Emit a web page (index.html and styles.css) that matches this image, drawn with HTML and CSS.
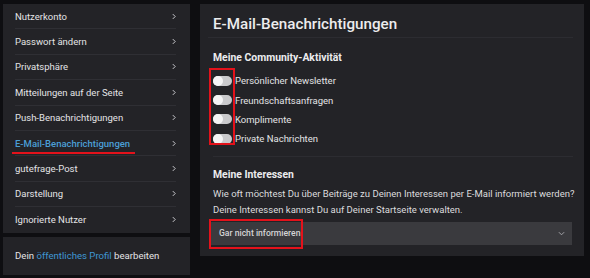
FILE: index.html
```html
<!DOCTYPE html>
<html lang="de">
<head>
<meta charset="utf-8">
<link rel="stylesheet" href="styles.css">
</head>
<body>
<div class="page">
  <aside class="side">
    <nav class="menu">
      <a class="item">Nutzerkonto<svg class="chev" viewBox="0 0 5 8"><path d="M1 1l3 3-3 3"/></svg></a>
      <a class="item">Passwort ändern<svg class="chev" viewBox="0 0 5 8"><path d="M1 1l3 3-3 3"/></svg></a>
      <a class="item">Privatsphäre<svg class="chev" viewBox="0 0 5 8"><path d="M1 1l3 3-3 3"/></svg></a>
      <a class="item">Mitteilungen auf der Seite<svg class="chev" viewBox="0 0 5 8"><path d="M1 1l3 3-3 3"/></svg></a>
      <a class="item">Push-Benachrichtigungen<svg class="chev" viewBox="0 0 5 8"><path d="M1 1l3 3-3 3"/></svg></a>
      <a class="item active"><span class="mark">E-Mail-Benachrichtigungen</span><svg class="chev" viewBox="0 0 5 8"><path d="M1 1l3 3-3 3"/></svg></a>
      <a class="item">gutefrage-Post<svg class="chev" viewBox="0 0 5 8"><path d="M1 1l3 3-3 3"/></svg></a>
      <a class="item">Darstellung<svg class="chev" viewBox="0 0 5 8"><path d="M1 1l3 3-3 3"/></svg></a>
      <a class="item">Ignorierte Nutzer<svg class="chev" viewBox="0 0 5 8"><path d="M1 1l3 3-3 3"/></svg></a>
    </nav>
    <div class="profile"><span>Dein <span class="link">öffentliches Profil</span> bearbeiten</span></div>
  </aside>
  <main class="panel">
    <h1 class="title">E-Mail-Benachrichtigungen</h1>
    <section class="section">
      <h2 class="heading">Meine Community-Aktivität</h2>
      <div class="toggles">
        <label class="row"><span class="toggle"></span>Persönlicher Newsletter</label>
        <label class="row"><span class="toggle"></span>Freundschaftsanfragen</label>
        <label class="row"><span class="toggle"></span>Komplimente</label>
        <label class="row"><span class="toggle"></span>Private Nachrichten</label>
        <span class="redbox toggles-box"></span>
      </div>
    </section>
    <section class="section interests">
      <h2 class="heading">Meine Interessen</h2>
      <p class="text">Wie oft möchtest Du über Beiträge zu Deinen Interessen per E-Mail informiert werden?<br>Deine Interessen kannst Du auf Deiner Startseite verwalten.</p>
      <div class="select">
        <span class="value">Gar nicht informieren</span>
        <svg class="down" viewBox="0 0 8 5"><path d="M1 1l3 3 3-3"/></svg>
        <span class="redbox select-box"></span>
      </div>
    </section>
  </main>
</div>
</body>
</html>
```
FILE: styles.css
```css
* { box-sizing: border-box; margin: 0; padding: 0; }
body {
  background: #0e0e11;
  font-family: Roboto, "Liberation Sans", Arial, sans-serif;
  color: #e4e4e6;
  width: 590px;
  height: 278px;
  overflow: hidden;
}
.page {
  display: flex;
  gap: 10px;
  padding: 4px 6px 0 3px;
  align-items: flex-start;
}
.side {
  width: 187px;
  display: flex;
  flex-direction: column;
  gap: 4px;
}
.menu {
  background: #232327;
  padding: 0 14px 0 12px;
}
.item {
  display: flex;
  align-items: center;
  justify-content: space-between;
  height: 25.4px;
  font-size: 9.5px;
  color: #e4e4e6;
  border-bottom: 1px solid #2f2f34;
  position: relative;
}
.item:last-child { border-bottom: none; }
.item.active { color: #4b9fd6; font-weight: 500; }
.mark { position: relative; }
.mark::after {
  content: "";
  position: absolute;
  left: -3px;
  right: -5px;
  bottom: -5px;
  height: 2px;
  background: #e3121b;
}
.chev {
  width: 4px;
  height: 7px;
  fill: none;
  stroke: #d0d0d4;
  stroke-width: 1.2;
}
.profile {
  background: #232327;
  height: 38px;
  padding: 0 12px;
  display: flex;
  align-items: center;
  font-size: 9.6px;
}
.link { color: #3f97d3; }
.panel {
  width: 384px;
  height: 252px;
  background: #232327;
  padding: 0 12px 0 13px;
}
.title {
  font-size: 15.2px;
  font-weight: 500;
  color: #ececee;
  height: 34px;
  padding-top: 12px;
  line-height: 16px;
  border-bottom: 1px solid #2c2c31;
  margin: 0 -1px 0 -5px;
  padding-left: 5px;
}
.heading {
  font-size: 10.4px;
  font-weight: bold;
  line-height: 14px;
  color: #ececee;
}
.section { padding-top: 13px; }
.toggles {
  position: relative;
  margin-top: 6px;
  display: flex;
  flex-direction: column;
  padding-bottom: 7px;
  border-bottom: 1px solid #2c2c31;
  margin-right: -1px;
}
.row {
  display: flex;
  align-items: center;
  height: 19.4px;
  font-size: 9.5px;
  gap: 3px;
}
.toggle {
  width: 19px;
  height: 10px;
  border-radius: 5px;
  background: #c9c9cc;
  position: relative;
}
.toggle::before {
  content: "";
  position: absolute;
  left: 0;
  top: 0;
  width: 10px;
  height: 10px;
  border-radius: 50%;
  background: #f4f4f5;
}
.redbox {
  position: absolute;
  border: 2px solid #e3121b;
  pointer-events: none;
}
.toggles-box {
  left: -4px;
  top: -3px;
  width: 26px;
  height: 77px;
}
.interests { padding-top: 11px; }
.text {
  font-size: 9.5px;
  line-height: 16px;
  margin-top: 4px;
  color: #dcdcde;
  white-space: nowrap;
}
.select {
  position: relative;
  margin: 4px 0 0 -2px;
  height: 23px;
  background: #3a3a3e;
  display: flex;
  align-items: center;
  justify-content: space-between;
  padding: 0 7px 0 8px;
}
.value {
  font-size: 8.6px;
  font-weight: 500;
  color: #d4d4d6;
}
.down {
  width: 7px;
  height: 5px;
  fill: none;
  stroke: #a8a8ac;
  stroke-width: 1.1;
}
.select-box {
  left: -2px;
  top: -3px;
  width: 94px;
  height: 30px;
}
```
